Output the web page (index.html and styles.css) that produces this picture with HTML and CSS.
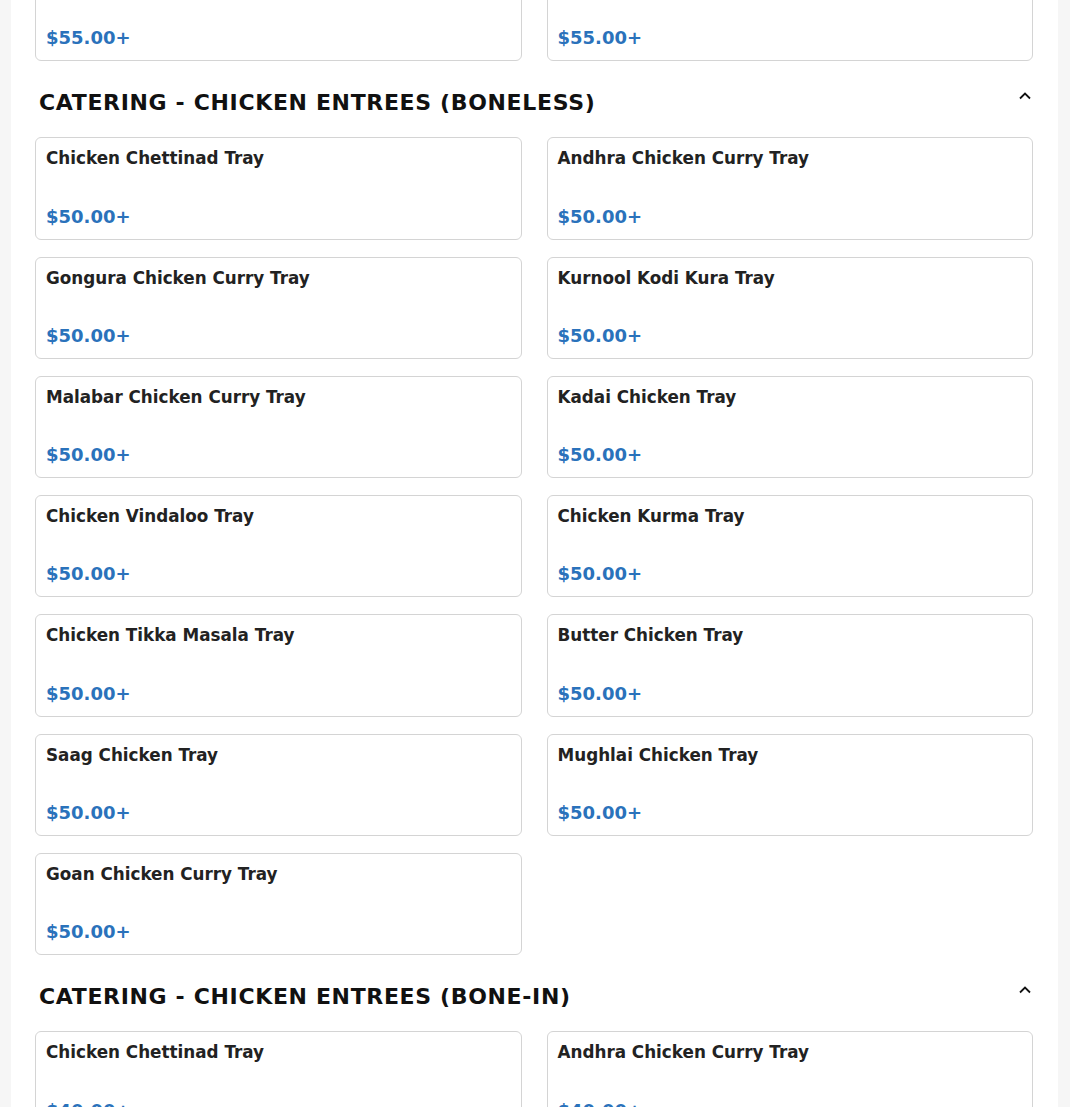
FILE: index.html
```html
<!DOCTYPE html>
<html lang="en">
<head>
    <meta charset="UTF-8">
    <title>Catering Menu</title>
    <link rel="stylesheet" href="styles.css">
</head>
<body>
    <div class="menu">
        <div class="section scrolled">
            <div class="items">
                <div class="item"><div class="name">Paneer Tray</div><div class="price">$55.00+</div></div>
                <div class="item"><div class="name">Veg Tray</div><div class="price">$55.00+</div></div>
            </div>
        </div>

        <div class="section">
            <div class="section-head">
                <h2>CATERING - CHICKEN ENTREES (BONELESS)</h2>
                <svg class="chevron" width="14" height="12" viewBox="0 0 14 12"><polyline points="2,8.5 7,3.5 12,8.5" fill="none" stroke="#111" stroke-width="1.8"/></svg>
            </div>
            <div class="items">
                <div class="item"><div class="name">Chicken Chettinad Tray</div><div class="price">$50.00+</div></div>
                <div class="item"><div class="name">Andhra Chicken Curry Tray</div><div class="price">$50.00+</div></div>
                <div class="item"><div class="name">Gongura Chicken Curry Tray</div><div class="price">$50.00+</div></div>
                <div class="item"><div class="name">Kurnool Kodi Kura Tray</div><div class="price">$50.00+</div></div>
                <div class="item"><div class="name">Malabar Chicken Curry Tray</div><div class="price">$50.00+</div></div>
                <div class="item"><div class="name">Kadai Chicken Tray</div><div class="price">$50.00+</div></div>
                <div class="item"><div class="name">Chicken Vindaloo Tray</div><div class="price">$50.00+</div></div>
                <div class="item"><div class="name">Chicken Kurma Tray</div><div class="price">$50.00+</div></div>
                <div class="item"><div class="name">Chicken Tikka Masala Tray</div><div class="price">$50.00+</div></div>
                <div class="item"><div class="name">Butter Chicken Tray</div><div class="price">$50.00+</div></div>
                <div class="item"><div class="name">Saag Chicken Tray</div><div class="price">$50.00+</div></div>
                <div class="item"><div class="name">Mughlai Chicken Tray</div><div class="price">$50.00+</div></div>
                <div class="item"><div class="name">Goan Chicken Curry Tray</div><div class="price">$50.00+</div></div>
            </div>
        </div>

        <div class="section">
            <div class="section-head">
                <h2>CATERING - CHICKEN ENTREES (BONE-IN)</h2>
                <svg class="chevron" width="14" height="12" viewBox="0 0 14 12"><polyline points="2,8.5 7,3.5 12,8.5" fill="none" stroke="#111" stroke-width="1.8"/></svg>
            </div>
            <div class="items">
                <div class="item"><div class="name">Chicken Chettinad Tray</div><div class="price">$40.00+</div></div>
                <div class="item"><div class="name">Andhra Chicken Curry Tray</div><div class="price">$40.00+</div></div>
            </div>
        </div>
    </div>
</body>
</html>
```

FILE: styles.css
```css
html, body {
    margin: 0;
    padding: 0;
    background: #f6f6f6;
    font-family: "DejaVu Sans", Verdana, sans-serif;
}
.menu {
    background: #fff;
    margin: 0 12px 0 11px;
    padding: 0 25px 0 24px;
    min-height: 1107px;
}
.scrolled {
    margin-top: -41px;
}
.section-head {
    display: flex;
    justify-content: space-between;
    align-items: flex-start;
    padding: 29px 1px 21px 4px;
}
.section-head h2 {
    margin: 0;
    font-size: 22px;
    line-height: 26px;
    font-weight: bold;
    letter-spacing: 0.65px;
    color: #111;
}
.items {
    display: grid;
    grid-template-columns: 1fr 1fr;
    column-gap: 25px;
    row-gap: 17px;
}
.item {
    display: flex;
    flex-direction: column;
    justify-content: space-between;
    height: 102.3px;
    box-sizing: border-box;
    border: 1px solid #d4d4d4;
    border-radius: 6px;
    padding: 11px 10px 9px 10px;
}
.name {
    font-size: 16.8px;
    line-height: 19px;
    font-weight: bold;
    color: #222;
}
.price {
    font-size: 18px;
    line-height: 27px;
    font-weight: bold;
    color: #2a72bb;
}
```
